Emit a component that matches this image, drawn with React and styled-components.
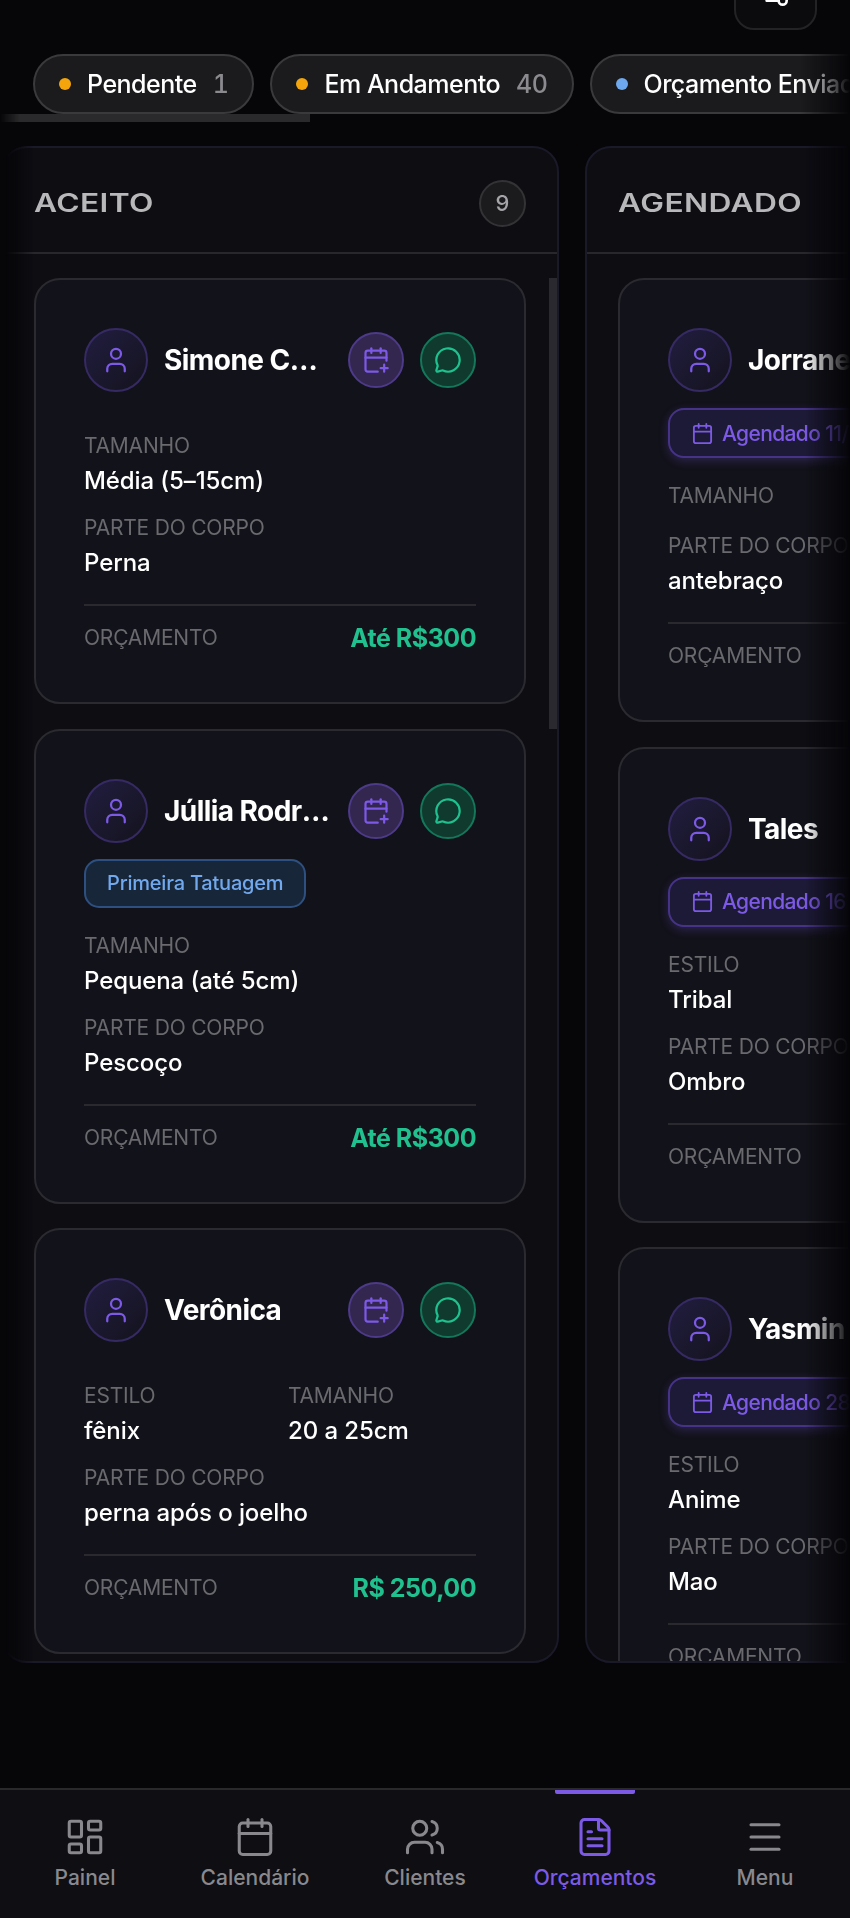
import React from 'react'
import styled, { createGlobalStyle, css } from 'styled-components'
import {
  Calendar,
  CalendarPlus,
  FileText,
  LayoutDashboard,
  Menu,
  MessageCircle,
  Settings2,
  User,
  Users,
} from 'lucide-react'

const GlobalStyle = createGlobalStyle`
  * { box-sizing: border-box; }
  html, body { margin: 0; padding: 0; background: #060609; overflow: hidden; }
  body { font-family: Inter, "Noto Sans", "Liberation Sans", sans-serif; color: #fff; }
`

const PURPLE = '#7c5ae6'
const GREEN = '#20c08f'

const statuses = [
  { label: 'Pendente', count: 1, color: '#f5a50b' },
  { label: 'Em Andamento', count: 40, color: '#f5a50b' },
  { label: 'Orçamento Enviado', count: 12, color: '#6ea8ee' },
]

const columns = [
  {
    title: 'ACEITO',
    count: 9,
    scroll: true,
    cards: [
      {
        name: 'Simone Costa',
        fields: [
          { label: 'TAMANHO', value: 'Média (5–15cm)', full: true },
          { label: 'PARTE DO CORPO', value: 'Perna', full: true },
        ],
        budget: 'Até R$300',
      },
      {
        name: 'Júllia Rodrigues',
        tag: 'Primeira Tatuagem',
        fields: [
          { label: 'TAMANHO', value: 'Pequena (até 5cm)', full: true },
          { label: 'PARTE DO CORPO', value: 'Pescoço', full: true },
        ],
        budget: 'Até R$300',
      },
      {
        name: 'Verônica',
        fields: [
          { label: 'ESTILO', value: 'fênix' },
          { label: 'TAMANHO', value: '20 a 25cm' },
          { label: 'PARTE DO CORPO', value: 'perna após o joelho', full: true },
        ],
        budget: 'R$ 250,00',
      },
    ],
  },
  {
    title: 'AGENDADO',
    count: 6,
    cards: [
      {
        name: 'Jorrane',
        date: 'Agendado 11/',
        fields: [
          { label: 'TAMANHO', value: '', full: true },
          { label: 'PARTE DO CORPO', value: 'antebraço', full: true },
        ],
      },
      {
        name: 'Tales',
        date: 'Agendado 16',
        fields: [
          { label: 'ESTILO', value: 'Tribal', full: true },
          { label: 'PARTE DO CORPO', value: 'Ombro', full: true },
        ],
      },
      {
        name: 'Yasmin',
        date: 'Agendado 28',
        fields: [
          { label: 'ESTILO', value: 'Anime', full: true },
          { label: 'PARTE DO CORPO', value: 'Mao', full: true },
        ],
      },
    ],
  },
]

const navItems = [
  { label: 'Painel', Icon: LayoutDashboard },
  { label: 'Calendário', Icon: Calendar },
  { label: 'Clientes', Icon: Users },
  { label: 'Orçamentos', Icon: FileText, active: true },
  { label: 'Menu', Icon: Menu },
]

function BudgetCard({ card }) {
  return (
    <Card>
      <CardHeader>
        <Avatar><User size={30} strokeWidth={1.8} /></Avatar>
        <Name>{card.name}</Name>
        <Actions>
          <RoundButton $tone="purple"><CalendarPlus size={28} strokeWidth={1.9} /></RoundButton>
          <RoundButton $tone="green"><MessageCircle size={28} strokeWidth={1.9} /></RoundButton>
        </Actions>
      </CardHeader>
      {card.tag && <TagChip>{card.tag}</TagChip>}
      {card.date && (
        <DateChip>
          <Calendar size={23} strokeWidth={1.9} />
          {card.date}
        </DateChip>
      )}
      <Fields>
        {card.fields.map((f) => (
          <Field key={f.label} $full={f.full}>
            <Label>{f.label}</Label>
            <Value>{f.value}</Value>
          </Field>
        ))}
      </Fields>
      <Footer>
        <Label>ORÇAMENTO</Label>
        {card.budget && <Budget>{card.budget}</Budget>}
      </Footer>
    </Card>
  )
}

export default function App() {
  return (
    <Page>
      <GlobalStyle />
      <TopBar>
        <FilterButton><Settings2 size={32} strokeWidth={2} /></FilterButton>
      </TopBar>

      <StatusRow>
        {statuses.map((s) => (
          <StatusPill key={s.label}>
            <Dot $color={s.color} />
            <span>{s.label}</span>
            <Count>{s.count}</Count>
          </StatusPill>
        ))}
        <RowThumb />
      </StatusRow>

      <Board>
        {columns.map((col) => (
          <Column key={col.title}>
            <ColumnHeader>
              <ColumnTitle>{col.title}</ColumnTitle>
              <ColumnCount>{col.count}</ColumnCount>
            </ColumnHeader>
            <CardList>
              {col.cards.map((card) => (
                <BudgetCard key={card.name} card={card} />
              ))}
              {col.scroll && <ListThumb />}
            </CardList>
          </Column>
        ))}
      </Board>

      <BottomNav>
        {navItems.map(({ label, Icon, active }) => (
          <NavItem key={label} $active={active}>
            {active && <ActiveBar />}
            <Icon size={42} strokeWidth={1.75} />
            <span>{label}</span>
          </NavItem>
        ))}
      </BottomNav>
    </Page>
  )
}

const Page = styled.div`
  width: 850px;
  height: 1918px;
  display: flex;
  flex-direction: column;
  overflow: hidden;
  background: #060609;
`

const TopBar = styled.div`
  height: 30px;
  flex: none;
  display: flex;
  justify-content: flex-end;
  align-items: flex-end;
  padding-right: 33px;
`

const FilterButton = styled.div`
  width: 83px;
  height: 72px;
  flex: none;
  display: flex;
  align-items: center;
  justify-content: center;
  border: 2px solid #232326;
  border-radius: 20px;
  background: #0b0b0e;
  color: #fff;
`

const StatusRow = styled.div`
  position: relative;
  margin-top: 24px;
  flex: none;
  display: flex;
  gap: 16px;
  padding: 0 0 8px 33px;
  overflow: hidden;
  mask-image: linear-gradient(90deg, transparent, #000 20px, #000 800px, transparent 850px);
`

const StatusPill = styled.div`
  height: 60px;
  flex: none;
  display: flex;
  align-items: center;
  gap: 16px;
  padding: 0 24px;
  border: 2px solid #3a3a3d;
  border-radius: 30px;
  background: #1b1b1e;
  font-size: 25px;
  font-weight: 500;
  letter-spacing: -0.02em;
  white-space: nowrap;
`

const Dot = styled.i`
  width: 12px;
  height: 12px;
  border-radius: 50%;
  background: ${(props) => props.$color};
`

const Count = styled.span`
  color: #8b8b8f;
  font-variant-numeric: tabular-nums;
`

const RowThumb = styled.div`
  position: absolute;
  left: 0;
  bottom: 0;
  width: 310px;
  height: 8px;
  background: #2a2a2c;
`

const Board = styled.div`
  margin-top: 24px;
  height: 1517px;
  flex: none;
  display: flex;
  gap: 26px;
  padding-left: 1px;
  overflow: hidden;
  mask-image: linear-gradient(90deg, transparent 6px, #000 34px, #000 805px, transparent 850px);
`

const Column = styled.section`
  width: 558px;
  flex: none;
  display: flex;
  flex-direction: column;
  overflow: hidden;
  border: 2px solid #1a1928;
  border-radius: 26px;
  background: #0d0d12;
`

const ColumnHeader = styled.header`
  height: 106px;
  flex: none;
  display: flex;
  align-items: center;
  justify-content: space-between;
  padding: 6px 31px 0;
  border-bottom: 2px solid #27272c;
`

const ColumnTitle = styled.h2`
  margin: 0;
  font-size: 25px;
  font-weight: 600;
  letter-spacing: 0.3px;
  color: #b8b8bb;
  transform: scaleX(1.27);
  transform-origin: left center;
`

const ColumnCount = styled.span`
  width: 47px;
  height: 47px;
  display: flex;
  align-items: center;
  justify-content: center;
  border: 2px solid #333336;
  border-radius: 50%;
  background: #1b1b1e;
  color: #a5a5a9;
  font-size: 22px;
  font-weight: 500;
`

const CardList = styled.div`
  position: relative;
  flex: 1;
  min-height: 0;
  display: flex;
  flex-direction: column;
  gap: 24.5px;
  padding: 24px 31px 0;
  overflow: hidden;
`

const ListThumb = styled.div`
  position: absolute;
  top: 24px;
  right: 0;
  width: 8px;
  height: 451px;
  background: #29292f;
`

const Card = styled.article`
  flex: none;
  display: flex;
  flex-direction: column;
  padding: 48px;
  border: 2px solid #2a2a30;
  border-radius: 26px;
  background: #12121a;
`

const CardHeader = styled.div`
  display: flex;
  align-items: center;
  margin-bottom: 16px;
`

const Avatar = styled.div`
  width: 64px;
  height: 64px;
  flex: none;
  display: flex;
  align-items: center;
  justify-content: center;
  border: 2px solid #362a63;
  border-radius: 50%;
  background: linear-gradient(135deg, #211d40, #14131d);
  color: ${PURPLE};
`

const Name = styled.div`
  flex: 1;
  min-width: 0;
  margin: 0 17px 0 16px;
  overflow: hidden;
  white-space: nowrap;
  text-overflow: ellipsis;
  font-size: 28px;
  font-weight: 700;
  letter-spacing: -0.02em;
  line-height: 40px;
`

const Actions = styled.div`
  display: flex;
  flex: none;
  gap: 16px;
`

const RoundButton = styled.div`
  width: 56px;
  height: 56px;
  display: flex;
  align-items: center;
  justify-content: center;
  border-radius: 50%;
  ${(props) =>
    props.$tone === 'green'
      ? css`
          border: 2px solid #14775a;
          background: #0f3a2d;
          color: ${GREEN};
        `
      : css`
          border: 2px solid #4d3a88;
          background: #33264f;
          color: ${PURPLE};
        `}
`

const TagChip = styled.div`
  width: fit-content;
  height: 49px;
  display: flex;
  align-items: center;
  padding: 0 21px;
  border: 2px solid #2e5080;
  border-radius: 15px;
  background: #18263a;
  color: #72a9ee;
  font-size: 20px;
  font-weight: 500;
  letter-spacing: -0.01em;
`

const DateChip = styled.div`
  height: 50px;
  width: 300px;
  display: flex;
  align-items: center;
  gap: 8px;
  padding: 0 21px;
  border: 2px solid #463388;
  border-radius: 16px;
  background: #1d1a37;
  box-shadow: 0 3px 10px rgba(124, 90, 230, 0.25);
  color: ${PURPLE};
  font-size: 21px;
  font-weight: 500;
  letter-spacing: -0.03em;
  white-space: nowrap;
`

const Fields = styled.div`
  display: grid;
  grid-template-columns: 1fr 1fr;
  gap: 16px;
  margin-top: 24px;
`

const Field = styled.div`
  grid-column: ${(props) => (props.$full ? '1 / -1' : 'auto')};
`

const Label = styled.div`
  color: #69696e;
  font-size: 21px;
  line-height: 28px;
  letter-spacing: -0.01em;
`

const Value = styled.div`
  min-height: 2px;
  margin-top: 4px;
  color: #fff;
  font-size: 24px;
  font-weight: 500;
  line-height: 34px;
  letter-spacing: -0.004em;
`

const Footer = styled.div`
  display: flex;
  align-items: center;
  justify-content: space-between;
  height: 50px;
  margin-top: 24px;
  padding-top: 16px;
  border-top: 2px solid #29292e;
`

const Budget = styled.div`
  color: ${GREEN};
  font-size: 25px;
  font-weight: 700;
  letter-spacing: -0.02em;
`

const BottomNav = styled.nav`
  margin-top: auto;
  height: 130px;
  flex: none;
  display: grid;
  grid-template-columns: repeat(5, 1fr);
  border-top: 2px solid #29292c;
  background: #0e0e13;
`

const NavItem = styled.div`
  position: relative;
  display: flex;
  flex-direction: column;
  align-items: center;
  padding-top: 26px;
  color: ${(props) => (props.$active ? PURPLE : '#89898d')};
  font-size: 21px;
  font-weight: 500;

  span {
    margin-top: 6px;
    line-height: 28px;
  }
`

const ActiveBar = styled.i`
  position: absolute;
  top: 0;
  left: 50%;
  width: 80px;
  height: 4px;
  margin-left: -40px;
  border-radius: 0 0 2px 2px;
  background: ${PURPLE};
`
